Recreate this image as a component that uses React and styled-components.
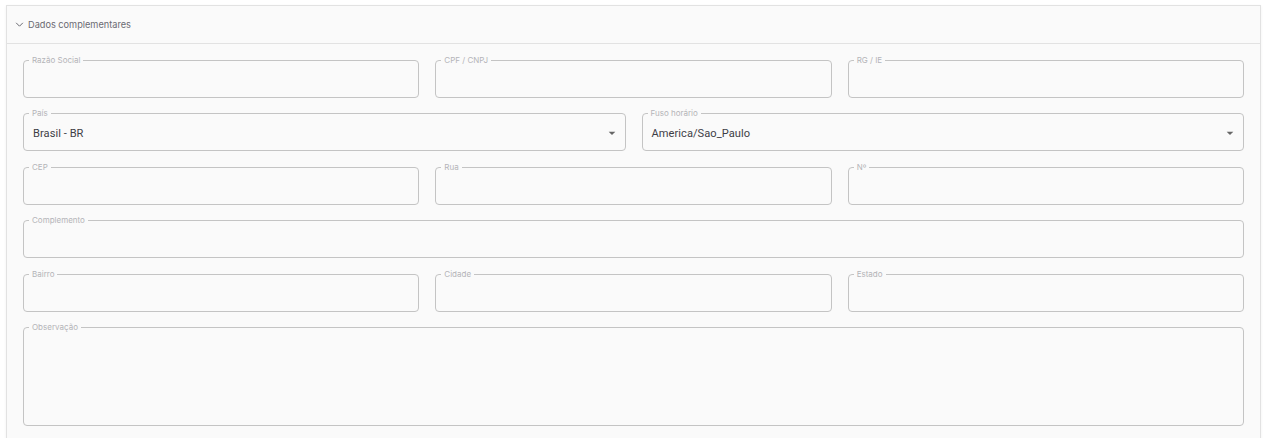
import React from 'react';
import styled, { createGlobalStyle } from 'styled-components';

const GlobalStyle = createGlobalStyle`
  * { box-sizing: border-box; }
  body {
    margin: 0;
    background: #ffffff;
    font-family: 'Inter', 'Roboto', sans-serif;
  }
`

const Page = styled.div`
  padding: 5px 8px 0 6px;
  height: 438px;
  overflow: hidden;
`

const Panel = styled.section`
  background: #fafafa;
  border: 1px solid #e2e2e2;
  box-shadow: 0 1px 3px rgba(0, 0, 0, 0.06);
  min-height: 460px;
`

const Header = styled.div`
  display: flex;
  align-items: center;
  gap: 4px;
  height: 38px;
  padding: 0 0 1px 8px;
  border-bottom: 1px solid #e2e2e2;
  color: #6a6a72;
  font-size: 9.2px;
`

const Content = styled.div`
  display: grid;
  grid-template-columns: repeat(6, 1fr);
  column-gap: 16px;
  row-gap: 11.4px;
  padding: 12px 16px 0 16px;
`

const Field = styled.fieldset`
  grid-column: span ${p => p.$span || 2};
  margin: 0;
  padding: 0 9px;
  height: ${p => p.$tall ? '103px' : '42px'};
  border: 1px solid #c4c4c4;
  border-radius: 4px;
  min-width: 0;
  display: flex;
  align-items: ${p => p.$tall ? 'flex-start' : 'center'};
  justify-content: space-between;
`

const Legend = styled.legend`
  margin-left: -4px;
  padding: 0 3px;
  font-size: 8px;
  line-height: 9px;
  color: #b4b4b8;
`

const Value = styled.span`
  font-family: 'Roboto', 'Inter', sans-serif;
  font-size: 11.1px;
  letter-spacing: 0.05px;
  color: #3e3e46;
  margin-top: -2px;
`

const Arrow = () => (
  <svg width="16" height="16" viewBox="0 0 24 24" style={{ marginRight: -4, marginTop: -2 }}>
    <path d="M7 10l5 5 5-5z" fill="#666" />
  </svg>
)

const Chevron = () => (
  <svg width="9" height="9" viewBox="0 0 24 24">
    <path d="M3 7.5l9 9 9-9" fill="none" stroke="#5a5a62" strokeWidth="2.4" />
  </svg>
)

const fields = [
  { label: 'Razão Social' },
  { label: 'CPF / CNPJ' },
  { label: 'RG / IE' },
  { label: 'País', value: 'Brasil - BR', span: 3, select: true },
  { label: 'Fuso horário', value: 'America/Sao_Paulo', span: 3, select: true },
  { label: 'CEP' },
  { label: 'Rua' },
  { label: 'Nº' },
  { label: 'Complemento', span: 6 },
  { label: 'Bairro' },
  { label: 'Cidade' },
  { label: 'Estado' },
  { label: 'Observação', span: 6, tall: true },
]

export default function App() {
  return (
    <>
      <GlobalStyle />
      <Page>
        <Panel>
          <Header>
            <Chevron />
            Dados complementares
          </Header>
          <Content>
            {fields.map(f => (
              <Field key={f.label} $span={f.span} $tall={f.tall}>
                <Legend>{f.label}</Legend>
                {f.value && <Value>{f.value}</Value>}
                {f.select && <Arrow />}
              </Field>
            ))}
          </Content>
        </Panel>
      </Page>
    </>
  )
}
